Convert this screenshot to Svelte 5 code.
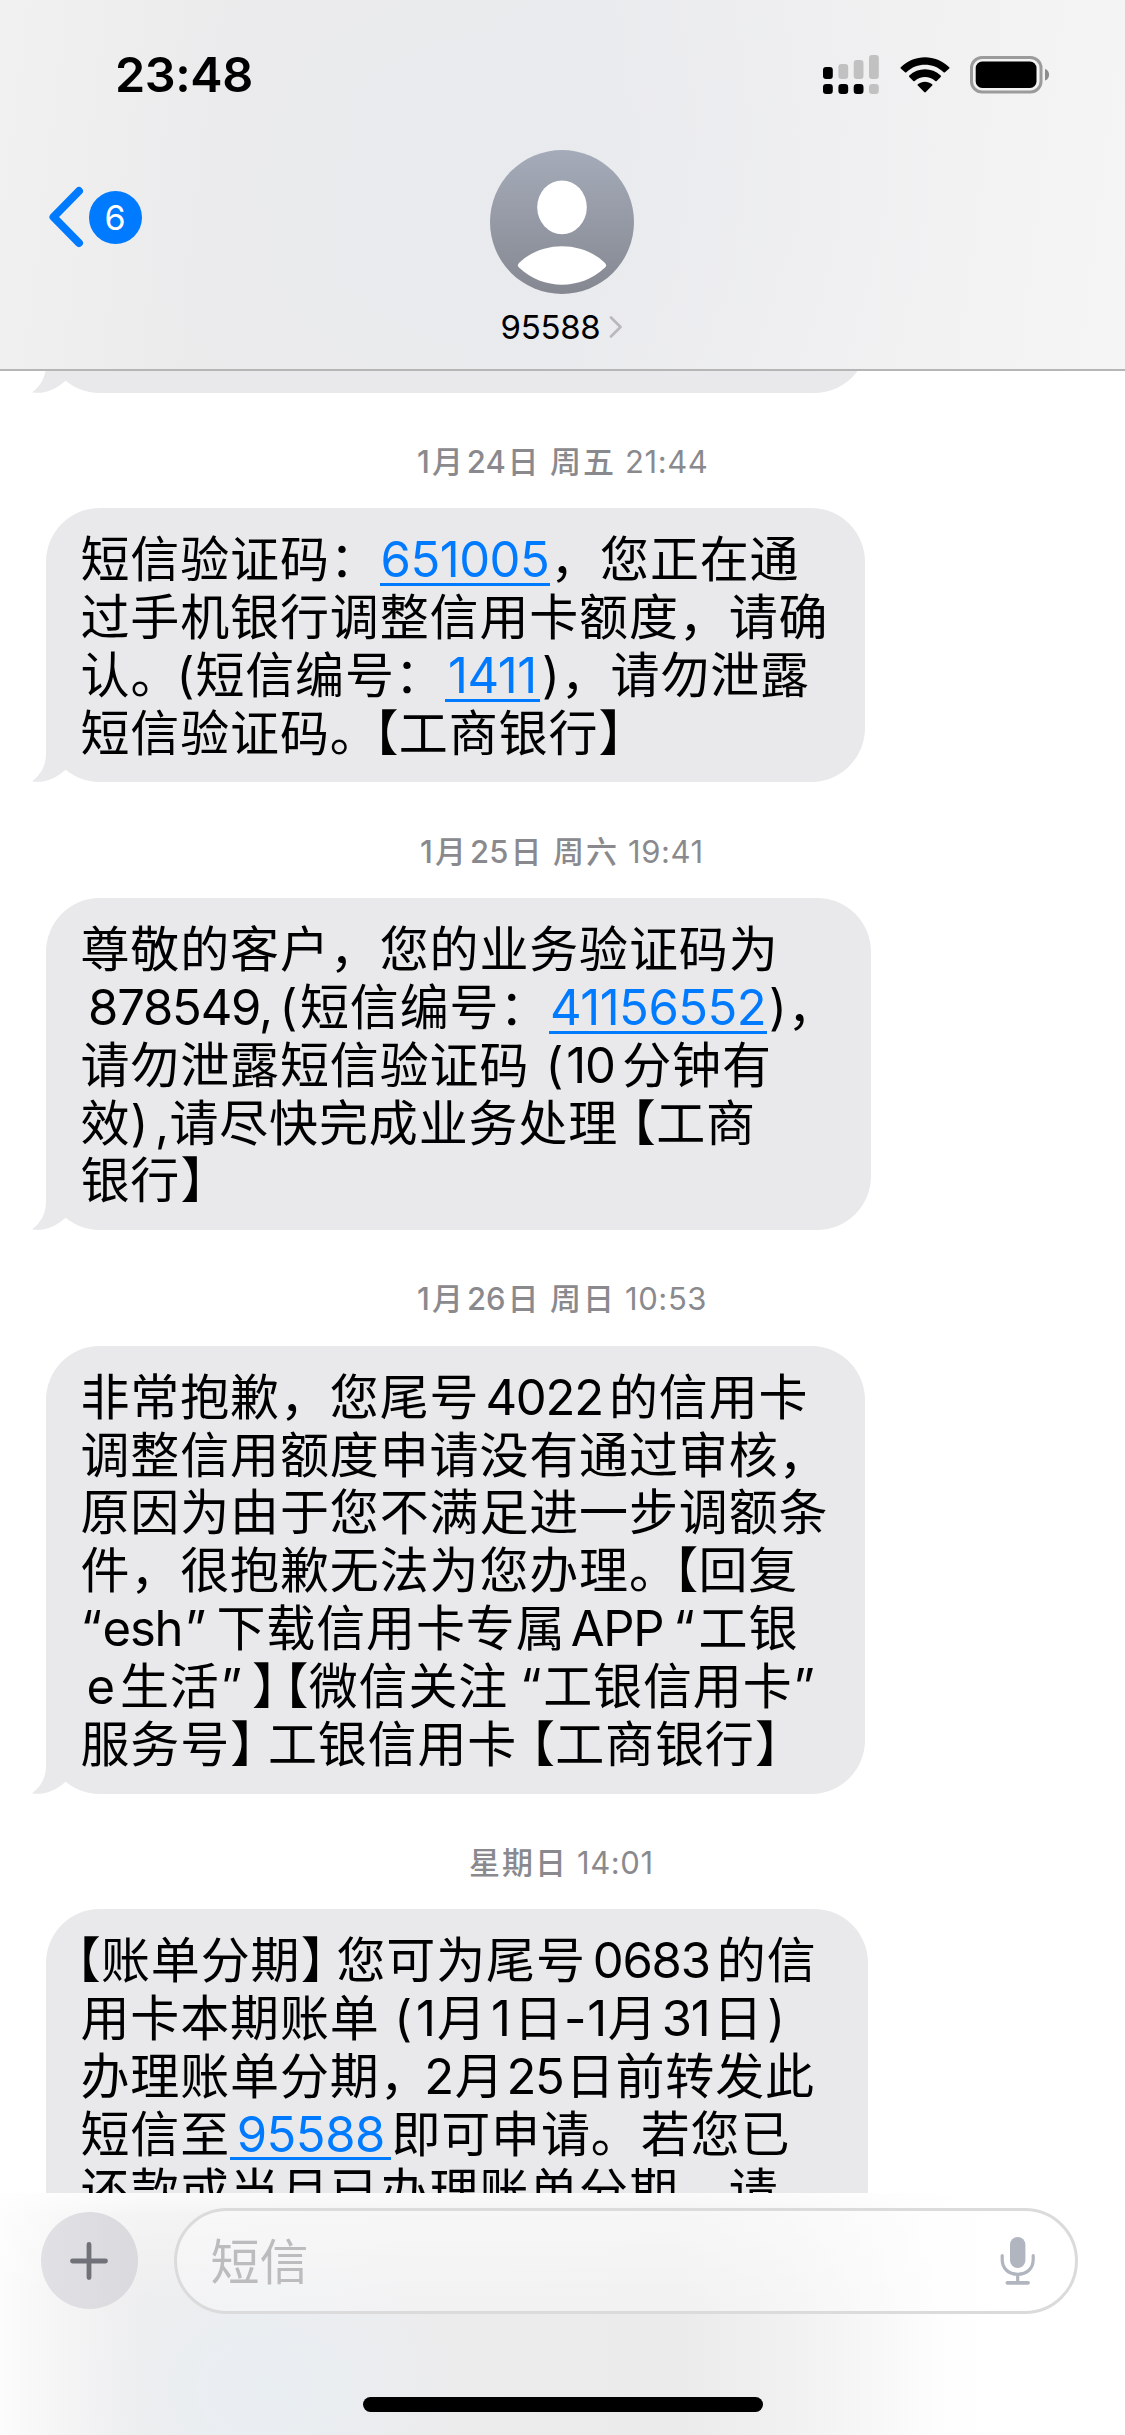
<script>
  // A line is a list of runs: a plain string is set on the CJK grid,
  // [text, width] is a latin / half-width run, a number is a spacer,
  // { link, w } is a detected number.
  const messages = [
    {
      date: [['1', 17], '月', ['24', 42.5], '日', 9.5, '周五'],
      time: ['21:44', 84],
      width: 818.5,
      lines: [
        ['短信验证码：', { link: '651005', w: 170.5 }, '，您正在通'],
        ['过手机银行调整信用卡额度，请确'],
        ['认', ['。', 44], ['(', 21], '短信编号：', { link: '1411', w: 95.3 }, [')', 20.7], '，请勿泄露'],
        ['短信验证码', ['。', 44], ['【', 25], '工商银行', ['】', 25]]
      ]
    },
    {
      date: [['1', 17], '月', ['25', 42.5], '日', 9.5, '周六'],
      time: ['19:41', 78],
      width: 824.5,
      lines: [
        ['尊敬的客户，您的业务验证码为'],
        [4, ['878549,', 191], ['(', 24.5], '短信编号：', { link: '41156552', w: 217.7 }, [')', 20.5], '，'],
        ['请勿泄露短信验证码', 12, ['(', 25], ['10', 48], 8, '分钟有'],
        ['效', [')', 16], 7, [',', 16], '请尽快完成业务处理', 13, ['【', 25], '工商'],
        ['银行', ['】', 25]]
      ]
    },
    {
      date: [['1', 17], '月', ['26', 42.5], '日', 9.5, '周日'],
      time: ['10:53', 84],
      width: 818.5,
      lines: [
        ['非常抱歉，您尾号', ['4022', 129.6], '的信用卡'],
        ['调整信用额度申请没有通过审核，'],
        ['原因为由于您不满足进一步调额条'],
        ['件，很抱歉无法为您办理', ['。', 44.5], ['【', 25], '回复'],
        [['“', 20.5], ['esh', 83], ['”', 22], 10.5, '下载信用卡专属', ['APP', 103], ['“', 30], '工银'],
        [['e', 39.5], '生活', ['”', 22], 10, ['】', 25], 7, ['【', 25], '微信关注', 9, ['“', 26], '工银信用卡', ['”', 22]],
        ['服务号', ['】', 25], 12.8, '工银信用卡', 13, ['【', 25], '工商银行', ['】', 25]]
      ]
    },
    {
      date: ['星期日'],
      time: ['14:01', 78],
      width: 822,
      lines: [
        [-4.5, ['【', 25], '账单分期', ['】', 25], 11, '您可为尾号', ['0683', 131], '的信'],
        ['用卡本期账单', 12, ['(', 22], ['1', 23.3], '月', ['1', 27], '日', ['-', 22], ['1', 22], '月', ['31', 56], '日', 3, [')', 18]],
        ['办理账单分期', ['，', 43], ['2', 32], '月', ['25', 61], '日前转发此'],
        ['短信至', { link: '95588', w: 161.3 }, '即可申请。若您已'],
        ['还款或当月已办理账单分期，请']
      ]
    }
  ];

  const signal = [
    { x: 0, top: 12, on: true, dot: true },
    { x: 15.4, top: 9, on: false, dot: true },
    { x: 30.7, top: 5, on: false, dot: true },
    { x: 46, top: 0, on: false, dot: false }
  ];

  const isHalf = (t) => t === '【' || t === '】';
  const isFull = (t) => t === '。' || t === '，';
</script>

{#snippet run(r)}
  {#if typeof r === 'number'}
    <span class="space" style="margin-left: {r}px"></span>
  {:else if typeof r === 'string'}
    <span class="cjk">{r}</span>
  {:else if Array.isArray(r)}
    <span class="latin" class:half={isHalf(r[0])} class:full={isFull(r[0])} style="width: {r[1]}px">{r[0]}</span>
  {:else}
    <a class="latin link" href="#{r.link}" style="width: {r.w}px">{r.link}</a>
  {/if}
{/snippet}

{#snippet tail()}
  <svg class="tail" viewBox="0 0 42 60" width="42" height="60" aria-hidden="true">
    <path d="M14 0V32C14 43 9 53 0 59.2C11 61.5 23 57 32.7 48.4L42 40V0Z" fill="#e9e9eb" />
  </svg>
{/snippet}

<div class="screen" lang="zh-CN">
  <header>
    <div class="status">
      <span class="clock">23:48</span>
      <div class="indicators">
        <svg width="56" height="39" viewBox="0 0 56 39">
          {#each signal as s}
            <rect x={s.x} y={s.top} width="9.8" height={24 - s.top} rx="3" fill={s.on ? '#000' : '#c1c1c2'} />
            <rect x={s.x} y="29" width="9.8" height="10" rx="3.2" fill={s.dot ? '#000' : '#c1c1c2'} />
          {/each}
        </svg>
        <svg class="wifi" width="50" height="36" viewBox="0 0 50 36">
          <path d="M0.8 10.2C14-3.2 36-3.2 49.2 10.2Q49.8 10.9 49.2 11.6L45 15.3Q44.3 15.8 43.6 15.2C33 5.4 17 5.4 6.4 15.2Q5.7 15.8 5 15.3L0.8 11.6Q0.2 10.9 0.8 10.2Z" />
          <path d="M9.3 18.6C18 10.2 32 10.2 40.7 18.6Q41.3 19.3 40.7 20L36.7 24Q36 24.5 35.3 23.9C29.5 18.7 20.5 18.7 14.7 23.9Q14 24.5 13.3 24L9.3 20Q8.7 19.3 9.3 18.6Z" />
          <path d="M17.8 27.2C22 23.8 28 23.8 32.2 27.2Q32.9 27.9 32.2 28.6L25.8 35.1Q25 35.8 24.2 35.1L17.8 28.6Q17.1 27.9 17.8 27.2Z" />
        </svg>
        <svg class="battery" width="80" height="38" viewBox="0 0 80 38">
          <rect x="1.5" y="1.5" width="69.5" height="34.5" rx="10.5" fill="none" stroke="#9b9b9c" stroke-width="3" />
          <rect x="5.7" y="5.5" width="60.8" height="26.5" rx="6.5" />
          <path d="M75 13C80.5 14.5 80.5 23 75 24.5Z" fill="#8d8d8e" />
        </svg>
      </div>
    </div>

    <div class="nav">
      <div class="back">
        <svg width="36" height="62" viewBox="0 0 36 62">
          <path d="M31 5L5.5 31L31 57" fill="none" stroke="#007aff" stroke-width="8" stroke-linecap="round" stroke-linejoin="round" />
        </svg>
        <span class="count">6</span>
      </div>
      <div class="contact">
        <svg width="144" height="144" viewBox="0 0 144 144">
          <defs>
            <linearGradient id="avatar" x1="0" y1="0" x2="0" y2="1">
              <stop offset="0" stop-color="#a5abb9" />
              <stop offset="1" stop-color="#858891" />
            </linearGradient>
          </defs>
          <circle cx="72" cy="72" r="72" fill="url(#avatar)" />
          <ellipse cx="72" cy="57.3" rx="24.8" ry="26.9" fill="#fff" />
          <path d="M29 113Q26.8 115.3 29 117.6C53 140.5 91 140.5 115 117.6Q117.2 115.3 115 113C92 90.5 52 90.5 29 113Z" fill="#fff" />
        </svg>
        <div class="name">
          <span>95588</span>
          <svg width="14" height="22" viewBox="0 0 14 22">
            <path d="M2 1.5L11.5 11L2 20.5" fill="none" stroke="#b9b9bc" stroke-width="2.6" stroke-linecap="round" stroke-linejoin="round" />
          </svg>
        </div>
      </div>
    </div>
  </header>

  <main>
    <div class="bubble previous">{@render tail()}</div>
    {#each messages as m}
      <div class="stamp">
        <span class="date">{#each m.date as r}{@render run(r)}{/each}</span>
        <span class="time" style="width: {m.time[1]}px">{m.time[0]}</span>
      </div>
      <div class="bubble" style="width: {m.width}px">
        {#each m.lines as line}
          <div class="line">{#each line as r}{@render run(r)}{/each}</div>
        {/each}
        {@render tail()}
      </div>
    {/each}
  </main>

  <footer>
    <div class="compose">
      <div class="plus">
        <svg width="40" height="40" viewBox="0 0 40 40">
          <path d="M20 3.5V36.5M3.5 20H36.5" stroke="#717279" stroke-width="4.8" stroke-linecap="round" />
        </svg>
      </div>
      <div class="field">
        <span class="placeholder">短信</span>
        <svg width="36" height="50" viewBox="0 0 36 50">
          <rect x="10" y="1" width="15.4" height="31" rx="7.7" fill="#b1b5bf" />
          <path d="M2.2 19.5V23.5C2.2 32.5 8.5 38.3 17.7 38.3S33.2 32.5 33.2 23.5V19.5M17.7 38.3V46" fill="none" stroke="#b1b5bf" stroke-width="3.2" stroke-linecap="round" />
          <path d="M7.4 46.8H28" stroke="#b1b5bf" stroke-width="3.8" stroke-linecap="round" />
        </svg>
      </div>
    </div>
    <div class="home"></div>
  </footer>
</div>

<style>
  :global(body) {
    margin: 0;
    background: #fff;
  }
  .screen {
    display: flex;
    flex-direction: column;
    width: 1125px;
    height: 2435px;
    overflow: hidden;
    background: #fff;
    color: #000;
    font-family: Inter, 'Noto Sans CJK SC', sans-serif;
    font-size: 49px;
  }

  header {
    box-sizing: border-box;
    flex: none;
    height: 371px;
    border-bottom: 2px solid #b6b6b7;
    background:
      radial-gradient(ellipse 420px 300px at 530px 190px, rgba(230, 233, 239, 0.4), rgba(230, 233, 239, 0)),
      linear-gradient(97deg, #f1f1f1 0%, #ebebec 20%, #eaebed 50%, #f0f0f1 74%, #f5f5f5 100%);
  }
  .status {
    display: flex;
    justify-content: space-between;
    align-items: flex-start;
    height: 150px;
    padding: 0 75px 0 115px;
    box-sizing: border-box;
  }
  .clock {
    margin-top: 45px;
    font-size: 48.5px;
    font-weight: 600;
    line-height: 60px;
    letter-spacing: -0.4px;
  }
  .indicators {
    display: flex;
    align-items: flex-start;
    padding-top: 55px;
  }
  .wifi {
    margin: 1.5px 0 0 20.5px;
  }
  .battery {
    margin: 1px 0 0 20.5px;
  }

  .nav {
    display: grid;
    grid-template-columns: 1fr 160px 1fr;
    padding-right: 1px;
  }
  .back {
    display: flex;
    align-items: center;
    gap: 5px;
    height: 62px;
    margin: 36px 0 0 47.5px;
  }
  .count {
    width: 53px;
    height: 53px;
    border-radius: 50%;
    background: #007aff;
    color: #fff;
    font-size: 34px;
    line-height: 53px;
    text-align: center;
  }
  .contact {
    display: flex;
    flex-direction: column;
    align-items: center;
  }
  .name {
    display: flex;
    align-items: center;
    gap: 9px;
    margin-top: 13px;
    font-size: 33px;
    line-height: 40px;
    letter-spacing: -0.3px;
  }

  main {
    flex: 1;
    min-height: 0;
    overflow: hidden;
    padding-left: 46px;
  }
  .bubble {
    position: relative;
    box-sizing: border-box;
    padding: 23.2px 0 20.1px 34.5px;
    border-radius: 54px;
    background: #e9e9eb;
  }
  .previous {
    width: 822px;
    height: 141px;
    margin-top: -119.5px;
  }
  .tail {
    position: absolute;
    left: -14px;
    bottom: 0;
  }
  .stamp {
    display: flex;
    justify-content: center;
    gap: 9px;
    height: 40px;
    margin: 49.5px 0 26.3px -47px;
    color: #8a8a8e;
    font-size: 31px;
    line-height: 40px;
  }
  .bubble + .stamp {
    margin-top: 49.2px;
  }
  .date {
    display: flex;
    font-weight: 500;
  }
  .date .cjk {
    letter-spacing: 2px;
  }
  .time {
    letter-spacing: 0.6px;
    white-space: nowrap;
  }
  .line {
    display: flex;
    height: 57.8px;
    line-height: 57.8px;
    white-space: nowrap;
  }
  .cjk,
  .latin,
  .space {
    flex: none;
  }
  .cjk {
    letter-spacing: 0.86px;
  }
  .latin {
    text-align: center;
    letter-spacing: -1.2px;
  }
  .half {
    font-feature-settings: 'halt';
    letter-spacing: 0;
  }
  .full {
    text-align: left;
  }
  .link {
    color: #007aff;
    letter-spacing: -0.5px;
    text-decoration: none;
    background: linear-gradient(#007aff, #007aff) 0 calc(100% - 3px) / 100% 3px no-repeat;
  }
  .date .latin {
    letter-spacing: 0;
  }

  footer {
    flex: none;
    height: 242px;
    background:
      linear-gradient(rgba(255, 255, 255, 0.8) 0, rgba(255, 255, 255, 0.35) 22px, rgba(255, 255, 255, 0) 110px),
      radial-gradient(ellipse 190px 150px at 265px 195px, rgba(231, 238, 244, 0.75), rgba(231, 238, 244, 0)),
      linear-gradient(90deg, #fcfcfc 0, #f5f5f6 60px, #eeeeef 140px, #ececed 400px, #ebebeb 680px, #f1f1f1 790px, #fdfdfd 940px, #fff 1000px);
  }
  .compose {
    display: flex;
    align-items: center;
    gap: 35.5px;
    height: 106px;
    padding: 14.5px 47px 0 40.5px;
  }
  .plus {
    display: grid;
    place-items: center;
    flex: none;
    width: 97.5px;
    height: 97.5px;
    border-radius: 50%;
    background: linear-gradient(90deg, #e1e1e5, #d9d9de);
  }
  .field {
    display: flex;
    align-items: center;
    justify-content: space-between;
    flex: 1;
    box-sizing: border-box;
    height: 106px;
    padding: 0 39.5px 0 34px;
    border: 3px solid #dbdbdc;
    border-radius: 53px;
    background: rgba(255, 255, 255, 0.35);
    color: #bcbcbe;
  }
  .placeholder {
    padding-bottom: 4px;
  }
  .home {
    width: 400px;
    height: 15px;
    margin: 83.5px auto 0;
    border-radius: 8px;
    background: #000;
  }
</style>
